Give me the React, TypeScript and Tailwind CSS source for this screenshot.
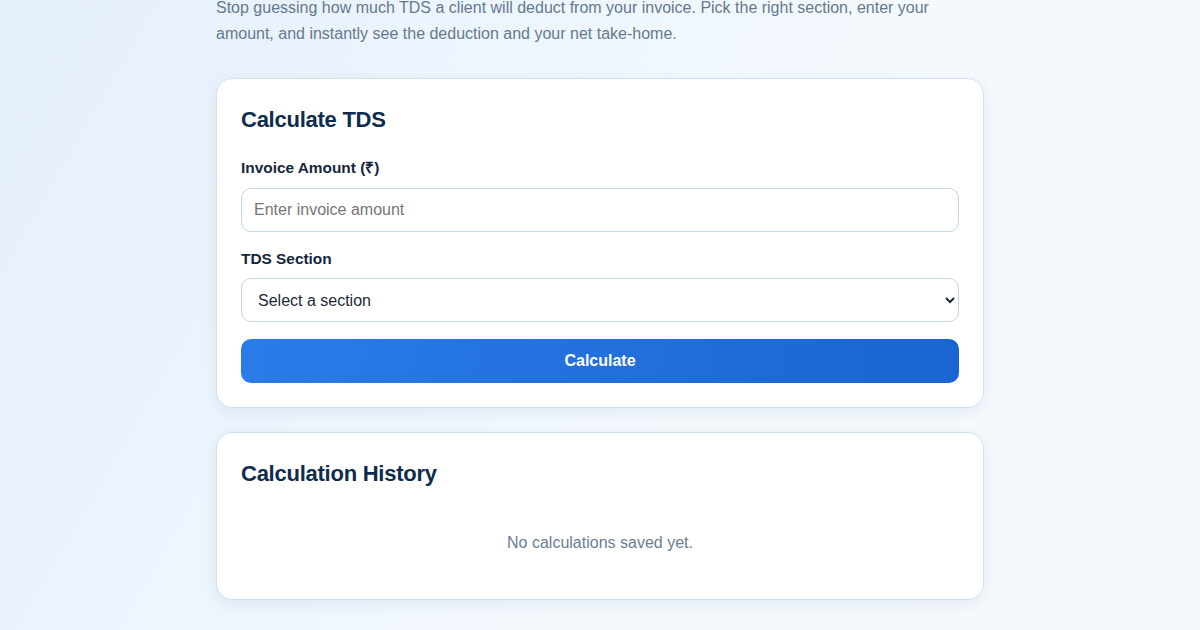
import { useState } from "react";

const font = { fontFamily: '"Liberation Sans", Arial, sans-serif' };

export default function App() {
  const [amount, setAmount] = useState("");
  const [section, setSection] = useState("");

  return (
    <div
      style={font}
      className="min-h-screen overflow-hidden bg-[linear-gradient(120deg,#e5effb_0%,#edf5fd_35%,#f4f9fd_60%,#f5f9fd_100%)]"
    >
      <div className="mx-auto w-[768px] pb-8">
        {/* Intro */}
        <p className="-mt-[5px] mb-[31px] text-[16px] leading-[26px] text-[#65798e]">
          Stop guessing how much TDS a client will deduct from your invoice. Pick the right section, enter your
          amount, and instantly see the deduction and your net take-home.
        </p>

        {/* Calculator card */}
        <section className="mb-6 rounded-2xl border border-[#d3e3ee] bg-white p-6 shadow-[0_4px_14px_rgba(30,70,120,0.08)]">
          <h2 className="mb-[21px] text-[22px] leading-[33px] font-bold tracking-[-0.25px] text-[#0e2c4d]">
            Calculate TDS
          </h2>

          <label className="mb-[9px] block text-[15.4px] leading-[22px] font-bold text-[#13263d]">
            Invoice Amount (₹)
          </label>
          <input
            type="number"
            value={amount}
            onChange={(e) => setAmount(e.target.value)}
            placeholder="Enter invoice amount"
            className="mb-[16px] block h-[44px] w-full rounded-[10px] border border-[#c3d6e3] px-3 text-[16px] text-[#13263d] outline-none placeholder:text-[#767676]"
          />

          <label className="mb-[8px] block text-[15.4px] leading-[22px] font-bold text-[#13263d]">
            TDS Section
          </label>
          <select
            value={section}
            onChange={(e) => setSection(e.target.value)}
            className="mb-[17px] block h-[44px] w-full rounded-[10px] border border-[#c3d6e3] bg-white px-3 text-[16px] text-[#1b2a3b] outline-none"
          >
            <option value="">Select a section</option>
            <option value="194C">194C – Contractors</option>
            <option value="194J">194J – Professional fees</option>
            <option value="194H">194H – Commission</option>
          </select>

          <button className="block h-[44px] w-full rounded-[10px] bg-[linear-gradient(100deg,#2b7be9_0%,#2170dc_50%,#1965d1_100%)] text-[16px] font-bold text-white">
            Calculate
          </button>
        </section>

        {/* History card */}
        <section className="rounded-2xl border border-[#d3e3ee] bg-white p-6 shadow-[0_4px_14px_rgba(30,70,120,0.08)]">
          <h2 className="mb-[21px] text-[22px] leading-[33px] font-bold tracking-[-0.25px] text-[#0e2c4d]">
            Calculation History
          </h2>
          <p className="py-5 text-center text-[16px] leading-[24px] text-[#6b7d92]">No calculations saved yet.</p>
        </section>
      </div>
    </div>
  );
}
